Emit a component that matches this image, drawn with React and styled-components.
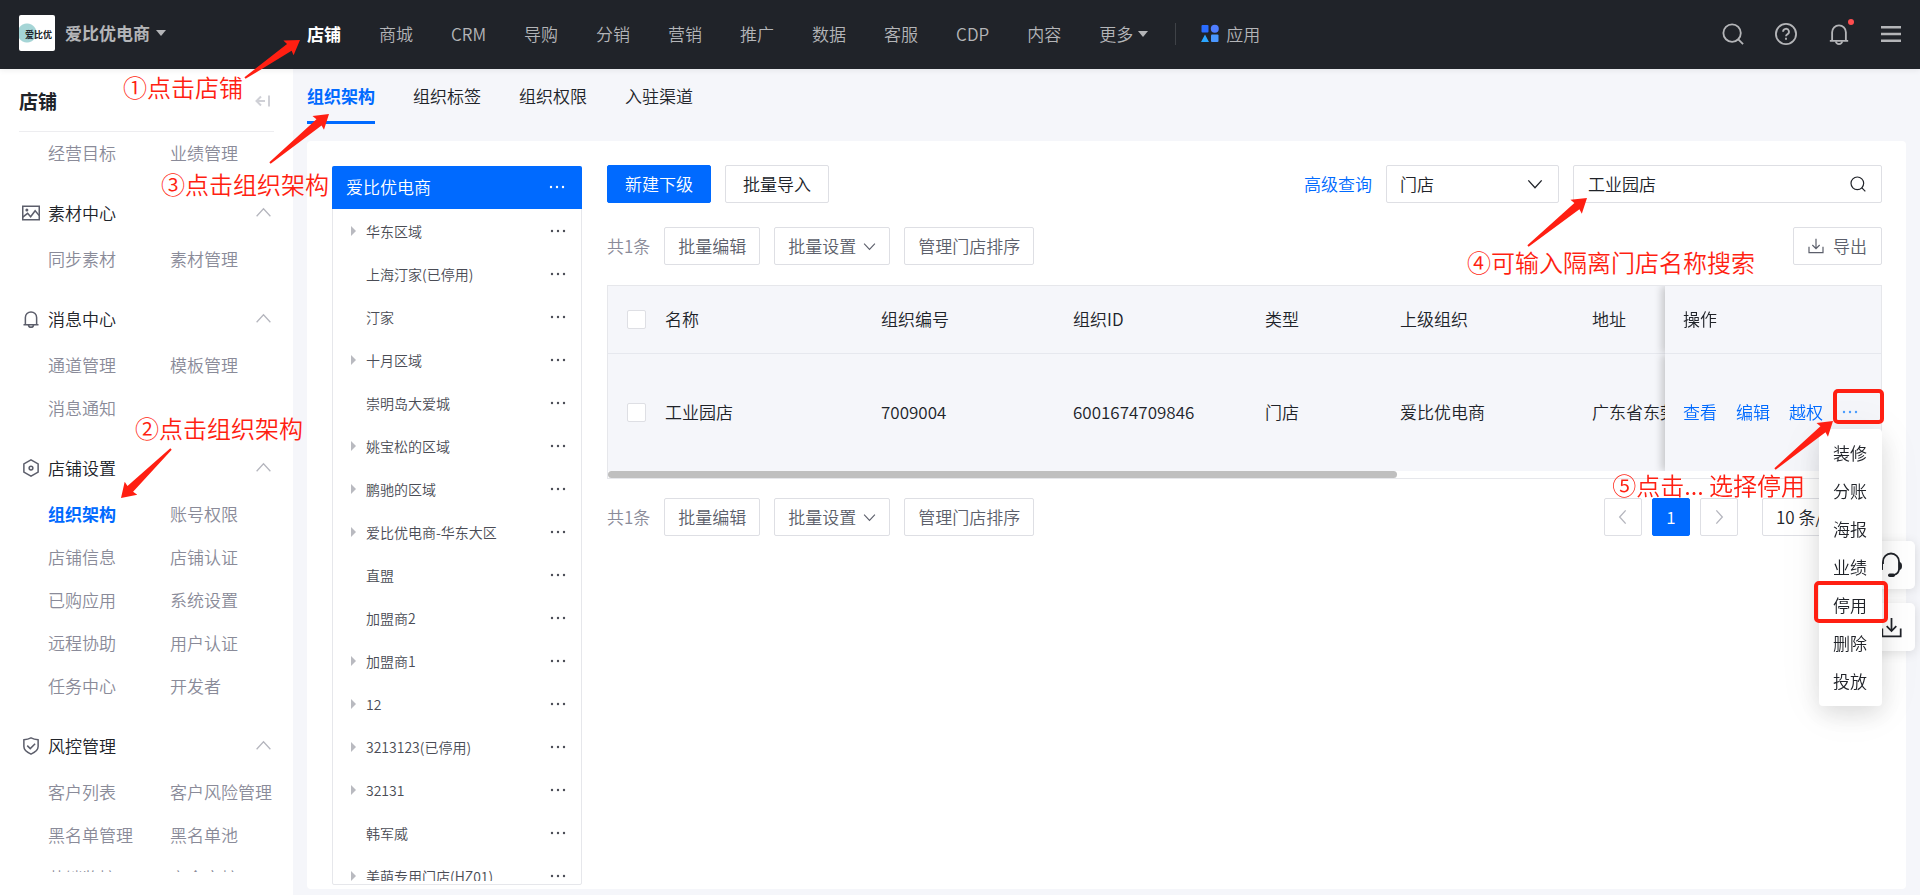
import React, { useState } from "react";
import styled, { createGlobalStyle, css } from "styled-components";

const navItems = ["店铺", "商城", "CRM", "导购", "分销", "营销", "推广", "数据", "客服", "CDP", "内容"];

const tabs = ["组织架构", "组织标签", "组织权限", "入驻渠道"];

const menuGroups = [
  { items: ["经营目标", "业绩管理"] },
  { title: "素材中心", icon: "image", items: ["同步素材", "素材管理"] },
  { title: "消息中心", icon: "bell", items: ["通道管理", "模板管理", "消息通知"] },
  {
    title: "店铺设置",
    icon: "hexagon",
    items: [
      "组织架构",
      "账号权限",
      "店铺信息",
      "店铺认证",
      "已购应用",
      "系统设置",
      "远程协助",
      "用户认证",
      "任务中心",
      "开发者",
    ],
  },
  {
    title: "风控管理",
    icon: "shield",
    items: ["客户列表", "客户风险管理", "黑名单管理", "黑名单池", "营销监控", "安全审核"],
  },
];

const treeNodes = [
  { name: "华东区域", open: true },
  { name: "上海汀家(已停用)" },
  { name: "汀家" },
  { name: "十月区域", open: true },
  { name: "崇明岛大爱城" },
  { name: "姚宝松的区域", open: true },
  { name: "鹏驰的区域", open: true },
  { name: "爱比优电商-华东大区", open: true },
  { name: "直盟" },
  { name: "加盟商2" },
  { name: "加盟商1", open: true },
  { name: "12", open: true },
  { name: "3213123(已停用)", open: true },
  { name: "32131", open: true },
  { name: "韩军威" },
  { name: "美萌专用门店(HZ01)", open: true },
];

const moreActions = ["装修", "分账", "海报", "业绩", "停用", "删除", "投放"];

/* ---------- icons ---------- */

const Svg = ({ size = 18, width = 1.5, children }) => (
  <svg
    width={size}
    height={size}
    viewBox="0 0 24 24"
    fill="none"
    stroke="currentColor"
    strokeWidth={width}
    aria-hidden="true"
  >
    {children}
  </svg>
);

const SearchIcon = ({ size, width }) => (
  <Svg size={size} width={width}>
    <circle cx="11" cy="11" r="9.5" />
    <path d="M17.5 17.5L23 23" />
  </Svg>
);

const HelpIcon = () => (
  <Svg size={22} width={2}>
    <circle cx="12" cy="12" r="11" />
    <path d="M8.8 9.6a3.2 3.2 0 1 1 4.6 2.8c-1 .5-1.4 1-1.4 2.1" />
    <path d="M12 16.2v2.2" />
  </Svg>
);

const BellIcon = ({ size, width = 2 }) => (
  <Svg size={size} width={width}>
    <path d="M2 19.5h20M4.5 19.5V10a7.5 7.5 0 0 1 15 0v9.5" />
    <path d="M8.5 20c.4 1.900 1.800 3 3.500 3s3.100-1.100 3.500-3" />
  </Svg>
);

const MenuIcon = () => (
  <svg width="20" height="22" viewBox="0 0 20 22" fill="currentColor" aria-hidden="true">
    <path d="M0 3h20v2.500H0zM0 9.700h20v2.500H0zM0 16.500h20V19H0z" />
  </svg>
);

const DownloadIcon = ({ size, width }) => (
  <Svg size={size} width={width}>
    <path d="M1.500 13v9h21v-9" />
    <path d="M12 1v14.500M6.500 10.500L12 16l5.500-5.500" />
  </Svg>
);

const HeadsetIcon = () => (
  <svg width="24" height="26" viewBox="0 0 24 26" fill="none" stroke="currentColor" aria-hidden="true">
    <path d="M4 12V9.500a8 8 0 0 1 16 0V17c0 3-2 5-5 6" strokeWidth="1.800" />
    <path d="M4 10v8c-2 0-3-1.500-3-4s1-4 3-4zM20 10v8c2 0 3-1.500 3-4s-1-4-3-4z" fill="currentColor" stroke="none" />
    <rect x="9" y="21.500" width="7" height="3.500" rx="1.700" fill="currentColor" stroke="none" />
  </svg>
);

const Chevron = ({ dir = "down", size = 14 }) => {
  const paths = {
    down: "M2 6.500L12 17.500L22 6.500",
    up: "M1 18L12 6L23 18",
    left: "M16 2L7 12L16 22",
    right: "M8 2L17 12L8 22",
  };
  return (
    <Svg size={size} width={2}>
      <path d={paths[dir]} />
    </Svg>
  );
};

const Dots = () => (
  <svg width="16" height="4" viewBox="0 0 16 4" fill="currentColor" aria-hidden="true">
    <circle cx="2" cy="2" r="1.200" />
    <circle cx="8" cy="2" r="1.200" />
    <circle cx="14" cy="2" r="1.200" />
  </svg>
);

const CaretDown = () => (
  <svg width="10" height="6" viewBox="0 0 10 6" fill="currentColor" aria-hidden="true">
    <path d="M0 0h10L5 6z" />
  </svg>
);

const AppsIcon = () => (
  <svg width="18" height="20" viewBox="0 0 18 20" aria-hidden="true">
    <rect x="0.500" y="1" width="7" height="7.500" rx="1" fill="#2a6cff" />
    <circle cx="13.800" cy="4.800" r="4" fill="#4f7dff" />
    <path d="M4 10.500L8 18H0z" fill="#2ba6ff" />
    <rect x="10" y="10.500" width="7.500" height="7.500" rx="1" fill="#4a97ff" />
  </svg>
);

const CollapseIcon = () => (
  <svg width="16" height="12" viewBox="0 0 16 12" fill="none" stroke="#cfd0d6" strokeWidth="2" aria-hidden="true">
    <path d="M1.500 6H10M6 1.500L1.500 6L6 10.500M14 0.500v11" />
  </svg>
);

function GroupIcon({ name }) {
  if (name === "image") {
    return (
      <Svg width={2}>
        <rect x="1" y="3" width="22" height="18" />
        <circle cx="6.500" cy="8" r="1" />
        <path d="M1 17.500l6.500-5 4 4.500 6-8 5.500 6.500" />
      </Svg>
    );
  }
  if (name === "bell") return <BellIcon size={18} />;
  if (name === "hexagon") {
    return (
      <Svg width={2}>
        <path d="M12 1.200l9.500 5.400v10.800L12 22.800l-9.500-5.400V6.600z" />
        <circle cx="12" cy="12" r="2.500" />
      </Svg>
    );
  }
  return (
    <Svg width={2}>
      <path d="M12 1.200c3 1.600 6 2.300 9.500 2.600v9c0 4.500-4 7.700-9.500 10-5.500-2.300-9.500-5.500-9.500-10v-9C6 3.500 9 2.800 12 1.200z" />
      <path d="M7 11.500l4 4 6.500-6.500" />
    </Svg>
  );
}

/* arrow of a note, drawn from its tail to its tip */
function NoteArrow({ dx, dy, ...pos }) {
  const w = Math.abs(dx);
  const h = Math.abs(dy);
  const len = Math.hypot(dx, dy);
  const angle = (Math.atan2(dy, dx) * 180) / Math.PI;
  return (
    <Arrow {...pos} width={w} height={h} aria-hidden="true">
      <g transform={`translate(${dx > 0 ? 0 : w} ${dy > 0 ? 0 : h}) rotate(${angle})`}>
        <polygon
          points={`0,-1 ${len - 13},-4 ${len - 14},-9 ${len},0 ${len - 14},9 ${len - 13},4 0,1`}
        />
      </g>
    </Arrow>
  );
}

/* ---------- parts ---------- */

function TopBar() {
  return (
    <Header>
      <Brand>
        <Logo>
          <span>爱比优</span>
        </Logo>
        <BrandButton type="button">
          爱比优电商
          <CaretDown />
        </BrandButton>
      </Brand>
      <Nav>
        {navItems.map((item, i) => (
          <NavLink href="#" key={item} $active={i === 0}>
            {item}
          </NavLink>
        ))}
        <NavLink href="#">
          更多
          <CaretDown />
        </NavLink>
        <Divider />
        <NavLink href="#" $apps>
          <AppsIcon />
          应用
        </NavLink>
      </Nav>
      <Tools>
        <IconButton aria-label="搜索">
          <SearchIcon size={22} width={2} />
        </IconButton>
        <IconButton aria-label="帮助">
          <HelpIcon />
        </IconButton>
        <IconButton aria-label="通知">
          <BellIcon size={22} />
          <Badge />
        </IconButton>
        <IconButton aria-label="菜单">
          <MenuIcon />
        </IconButton>
      </Tools>
    </Header>
  );
}

function SideMenu() {
  return (
    <Sidebar>
      <SideTitle>
        <h2>店铺</h2>
        <IconButton aria-label="收起">
          <CollapseIcon />
        </IconButton>
      </SideTitle>
      <SideScroll>
        {menuGroups.map((group) => (
          <section key={group.items[0]}>
            {group.title && (
              <GroupTitle type="button">
                <GroupIcon name={group.icon} />
                <span>{group.title}</span>
                <Chevron dir="up" size={15} />
              </GroupTitle>
            )}
            <GroupItems>
              {group.items.map((item) => (
                <SideLink href="#" key={item} $active={item === "组织架构"}>
                  {item}
                </SideLink>
              ))}
            </GroupItems>
          </section>
        ))}
      </SideScroll>
    </Sidebar>
  );
}

function OrgTree() {
  return (
    <Tree>
      <TreeHead>
        爱比优电商
        <IconButton aria-label="更多操作">
          <Dots />
        </IconButton>
      </TreeHead>
      <TreeList>
        {treeNodes.map((node) => (
          <TreeRow key={node.name}>
            <TreeCaret $show={node.open} />
            <span>{node.name}</span>
            <IconButton aria-label="更多操作">
              <Dots />
            </IconButton>
          </TreeRow>
        ))}
      </TreeList>
    </Tree>
  );
}

function BatchButtons() {
  return (
    <>
      <Total>共1条</Total>
      <Button $small>批量编辑</Button>
      <Button $small>
        批量设置
        <Chevron size={13} />
      </Button>
      <Button $small>管理门店排序</Button>
    </>
  );
}

function App() {
  const [keyword, setKeyword] = useState("工业园店");

  return (
    <Page>
      <GlobalStyle />
      <TopBar />
      <Body>
        <SideMenu />
        <Main>
          <Tabs>
            {tabs.map((tab, i) => (
              <Tab href="#" key={tab} $active={i === 0}>
                {tab}
              </Tab>
            ))}
          </Tabs>
          <Card>
            <OrgTree />
            <Content>
              <Toolbar>
                <Button $primary>新建下级</Button>
                <Button>批量导入</Button>
                <Spacer />
                <TextLink href="#">高级查询</TextLink>
                <SelectBox $wide>
                  <select aria-label="类型" defaultValue="门店">
                    <option>门店</option>
                  </select>
                  <Chevron size={16} />
                </SelectBox>
                <SearchBox>
                  <input
                    aria-label="门店名称"
                    value={keyword}
                    onChange={(e) => setKeyword(e.target.value)}
                  />
                  <IconButton aria-label="搜索">
                    <SearchIcon size={16} width={1.8} />
                  </IconButton>
                </SearchBox>
              </Toolbar>
              <Toolbar>
                <BatchButtons />
                <Spacer />
                <Button $export>
                  <DownloadIcon size={16} width={1.8} />
                  导出
                </Button>
              </Toolbar>
              <TableBox>
                <TableScroll>
                  <Table>
                    <colgroup>
                      <col width="40" />
                      <col width="216" />
                      <col width="192" />
                      <col width="192" />
                      <col width="135" />
                      <col width="192" />
                      <col />
                      <col width="216" />
                    </colgroup>
                    <thead>
                      <tr>
                        <th>
                          <Checkbox type="checkbox" aria-label="全选" />
                        </th>
                        <th>名称</th>
                        <th>组织编号</th>
                        <th>组织ID</th>
                        <th>类型</th>
                        <th>上级组织</th>
                        <th>地址</th>
                        <FixedTh>操作</FixedTh>
                      </tr>
                    </thead>
                    <tbody>
                      <tr>
                        <td>
                          <Checkbox type="checkbox" aria-label="工业园店" />
                        </td>
                        <td>工业园店</td>
                        <td>7009004</td>
                        <td>6001674709846</td>
                        <td>门店</td>
                        <td>爱比优电商</td>
                        <td>广东省东莞</td>
                        <FixedTd>
                          <Actions>
                            <TextLink href="#">查看</TextLink>
                            <TextLink href="#">编辑</TextLink>
                            <TextLink href="#">越权</TextLink>
                            <MoreButton aria-label="更多">
                              <Dots />
                            </MoreButton>
                          </Actions>
                        </FixedTd>
                      </tr>
                    </tbody>
                  </Table>
                </TableScroll>
                <ScrollTrack>
                  <ScrollThumb />
                </ScrollTrack>
              </TableBox>
              <Toolbar>
                <BatchButtons />
                <Spacer />
                <Pager>
                  <PageButton aria-label="上一页">
                    <Chevron dir="left" size={16} />
                  </PageButton>
                  <PageButton $active>1</PageButton>
                  <PageButton aria-label="下一页">
                    <Chevron dir="right" size={16} />
                  </PageButton>
                </Pager>
                <SelectBox>
                  <select aria-label="每页条数" defaultValue="10">
                    <option value="10">10 条/页</option>
                  </select>
                </SelectBox>
              </Toolbar>
            </Content>
          </Card>
        </Main>
      </Body>

      <FloatBar>
        <FloatButton aria-label="客服">
          <HeadsetIcon />
        </FloatButton>
        <FloatButton aria-label="下载">
          <DownloadIcon size={21} width={2} />
        </FloatButton>
      </FloatBar>
      <ActionMenu>
        {moreActions.map((action) => (
          <button type="button" key={action}>
            {action}
          </button>
        ))}
      </ActionMenu>

      <Note $left={123} $top={71}>①点击店铺</Note>
      <NoteArrow $left={245} $top={40} dx={55} dy={-38} />
      <Note $left={135} $top={412}>②点击组织架构</Note>
      <NoteArrow $left={121} $top={449} dx={-50} dy={49} />
      <Note $left={161} $top={168}>③点击组织架构</Note>
      <NoteArrow $left={270} $top={114} dx={59} dy={-49} />
      <Note $right={165} $top={246}>④可输入隔离门店名称搜索</Note>
      <NoteArrow $right={333} $top={198} dx={59} dy={-48} />
      <Note $right={115} $top={469}>⑤点击... 选择停用</Note>
      <NoteArrow $right={87} $top={421} dx={58} dy={-48} />
      <NoteBox $right={36} $top={389} $width={51} $height={35} />
      <NoteBox $right={32} $top={581} $width={74} $height={42} />
    </Page>
  );
}

/* ---------- styles ---------- */

const GlobalStyle = createGlobalStyle`
  * {
    box-sizing: border-box;
  }
  body {
    margin: 0;
    font-family: "Noto Sans CJK SC", sans-serif;
    font-size: 17px;
    font-weight: 350;
    line-height: 24px;
    color: #202329;
  }
  button, input, select {
    font: inherit;
    color: inherit;
    margin: 0;
  }
  button {
    cursor: pointer;
  }
  a {
    color: inherit;
    text-decoration: none;
  }
  h2 {
    margin: 0;
    font-size: 19px;
  }
  svg {
    flex-shrink: 0;
  }
`;

const Page = styled.div`
  position: relative;
  display: flex;
  flex-direction: column;
  height: 100vh;
  overflow: hidden;
  background: #f5f6fa;
`;

const Header = styled.header`
  display: flex;
  align-items: center;
  flex-shrink: 0;
  height: 69px;
  padding: 0 19px;
  background: #202329;
  color: #b4b5b8;
  box-shadow: 0 1px 6px rgba(0, 0, 0, 0.08);
  z-index: 1;
`;

const Brand = styled.div`
  display: flex;
  align-items: center;
  gap: 10px;
  width: 288px;
  padding-bottom: 3px;
`;

const Logo = styled.div`
  display: flex;
  align-items: center;
  width: 36px;
  height: 36px;
  overflow: hidden;
  border-radius: 2px;
  color: #202329;
  font-size: 9px;
  font-weight: 700;
  background: radial-gradient(circle at 8px 18px, #a5d5d6 9px, #fff 10px);
  span {
    padding: 4px 0 0 6px;
    white-space: nowrap;
  }
`;

const BrandButton = styled.button`
  display: flex;
  align-items: center;
  gap: 6px;
  padding: 0;
  border: 0;
  background: none;
  font-weight: 700;
`;

const Nav = styled.nav`
  display: flex;
  align-items: center;
  gap: 38px;
  padding-bottom: 1px;
`;

const NavLink = styled.a`
  display: flex;
  align-items: center;
  gap: ${(p) => (p.$apps ? "7px" : "5px")};
  white-space: nowrap;
  ${(p) =>
    p.$active &&
    css`
      color: #fff;
      font-weight: 700;
    `}
  ${(p) => p.$apps && "margin-left: -13px;"}
`;

const Divider = styled.span`
  width: 1px;
  height: 22px;
  margin-left: -11px;
  background: #3f4247;
`;

const Tools = styled.div`
  display: flex;
  gap: 31px;
  margin-left: auto;
  padding-bottom: 2px;
`;

const IconButton = styled.button.attrs({ type: "button" })`
  position: relative;
  display: flex;
  align-items: center;
  padding: 0;
  border: 0;
  background: none;
`;

const Badge = styled.span`
  position: absolute;
  top: -4px;
  right: -4px;
  width: 6px;
  height: 6px;
  border-radius: 50%;
  background: #ff4d4f;
`;

const Body = styled.div`
  display: flex;
  flex: 1;
  min-height: 0;
`;

const Sidebar = styled.aside`
  display: flex;
  flex-direction: column;
  flex-shrink: 0;
  width: 293px;
  padding-bottom: 23px;
  background: #fff;
`;

const SideTitle = styled.div`
  display: flex;
  align-items: center;
  justify-content: space-between;
  flex-shrink: 0;
  height: 63px;
  margin: 0 19px;
  padding: 1px 3px 0 0;
  border-bottom: 1px solid #ededf0;
`;

const SideScroll = styled.div`
  flex: 1;
  overflow: hidden;
`;

const GroupTitle = styled.button`
  display: flex;
  align-items: center;
  gap: 8px;
  width: 100%;
  height: 43px;
  margin: 17px 0 3px;
  padding: 0 22px 2px 22px;
  border: 0;
  background: none;
  text-align: left;
  svg {
    color: #5c5e6b;
  }
  span {
    flex: 1;
  }
  svg:last-child {
    color: #b5b6be;
  }
`;

const GroupItems = styled.div`
  display: grid;
  grid-template-columns: 122px 1fr;
  padding-left: 48px;
`;

const SideLink = styled.a`
  height: 43px;
  line-height: 41px;
  white-space: nowrap;
  color: ${(p) => (p.$active ? "#006aff" : "#8a8b99")};
  font-weight: ${(p) => (p.$active ? 700 : "inherit")};
`;

const Main = styled.main`
  display: flex;
  flex: 1;
  flex-direction: column;
  min-width: 0;
  padding: 0 14px 6px;
`;

const Tabs = styled.nav`
  display: flex;
  gap: 38px;
  height: 72px;
`;

const Tab = styled.a`
  height: 55px;
  line-height: 54px;
  color: ${(p) => (p.$active ? "#006aff" : "inherit")};
  font-weight: ${(p) => (p.$active ? 700 : "inherit")};
  border-bottom: ${(p) => (p.$active ? "3px solid #006aff" : "0")};
`;

const Card = styled.div`
  display: flex;
  flex: 1;
  gap: 25px;
  min-height: 0;
  padding: 24px 24px 4px 25px;
  border-radius: 4px;
  background: #fff;
`;

const Tree = styled.div`
  display: flex;
  flex-direction: column;
  flex-shrink: 0;
  width: 250px;
  margin-top: 1px;
  padding-bottom: 3px;
  border: 1px solid #e6e7eb;
  border-radius: 2px;
`;

const TreeHead = styled.div`
  display: flex;
  align-items: center;
  justify-content: space-between;
  flex-shrink: 0;
  height: 43px;
  margin: -1px -1px 0;
  padding: 0 17px 1px 14px;
  border-radius: 2px 2px 0 0;
  background: #006aff;
  color: #fff;
`;

const TreeList = styled.div`
  flex: 1;
  overflow: hidden;
`;

const TreeRow = styled.div`
  display: flex;
  align-items: center;
  height: 43px;
  padding: 0 15px 0 18px;
  color: #4a4c55;
  font-size: 14px;
  span {
    white-space: nowrap;
  }
  ${IconButton} {
    margin-left: auto;
  }
`;

const TreeCaret = styled.i`
  margin-right: 10px;
  border: 5px solid transparent;
  border-right: 0;
  border-left-color: ${(p) => (p.$show ? "#b9bac0" : "transparent")};
`;

const Content = styled.div`
  display: flex;
  flex: 1;
  flex-direction: column;
  min-width: 0;
`;

const Toolbar = styled.div`
  display: flex;
  align-items: center;
  gap: 14px;
  margin-bottom: 24px;
  &:nth-child(2) {
    margin-bottom: 20px;
  }
`;

const Spacer = styled.div`
  flex: 1;
`;

const Button = styled.button.attrs({ type: "button" })`
  display: flex;
  align-items: center;
  gap: ${(p) => (p.$export ? "9px" : "7px")};
  height: 38px;
  padding: 0 ${(p) => (p.$small ? "13px" : p.$export ? "14px" : "17px")};
  border: 1px solid ${(p) => (p.$primary ? "#006aff" : "#dedfe4")};
  border-radius: 2px;
  background: ${(p) => (p.$primary ? "#006aff" : "#fff")};
  color: ${(p) => (p.$primary ? "#fff" : p.$small || p.$export ? "#5c5f6b" : "#202329")};
  white-space: nowrap;
`;

const Total = styled.span`
  color: #8a8b99;
`;

const TextLink = styled.a`
  color: #006aff;
`;

const SelectBox = styled.div`
  display: flex;
  position: relative;
  width: ${(p) => (p.$wide ? "173px" : "120px")};
  height: 38px;
  border: 1px solid #dedfe4;
  border-radius: 2px;
  select {
    width: 100%;
    padding: 0 13px;
    border: 0;
    appearance: none;
    background: none;
  }
  svg {
    position: absolute;
    right: 15px;
    top: 10px;
    pointer-events: none;
  }
`;

const SearchBox = styled.div`
  display: flex;
  width: 309px;
  height: 38px;
  padding: 0 15px 0 14px;
  border: 1px solid #dedfe4;
  border-radius: 2px;
  input {
    flex: 1;
    min-width: 0;
    padding: 0;
    border: 0;
    outline: 0;
    background: none;
  }
`;

const TableBox = styled.div`
  margin-bottom: 19px;
  border: 1px solid #e6e7eb;
`;

const TableScroll = styled.div`
  overflow-x: auto;
  scrollbar-width: none;
`;

const Table = styled.table`
  width: 160%;
  table-layout: fixed;
  border-collapse: separate;
  border-spacing: 0;
  background: #f5f6fa;
  th,
  td {
    height: 117px;
    padding: 0 0 1px 17px;
    text-align: left;
    font-weight: inherit;
    white-space: nowrap;
  }
  th {
    height: 68px;
    border-bottom: 1px solid #e6e8ee;
  }
`;

const fixedCell = css`
  position: sticky;
  right: 0;
  background: #f5f6fa;
  box-shadow: -3px 0 8px rgba(0, 0, 0, 0.2);
  clip-path: inset(0 0 0 -12px);
`;

const FixedTh = styled.th`
  ${fixedCell}
  && {
    padding-left: 18px;
  }
`;

const FixedTd = styled.td`
  ${fixedCell}
  && {
    padding-left: 18px;
  }
`;

const Checkbox = styled.input`
  display: block;
  width: 19px;
  height: 19px;
  margin: 0 0 0 2px;
  border: 1px solid #dedfe4;
  border-radius: 2px;
  appearance: none;
  background: #fff;
`;

const Actions = styled.div`
  display: flex;
  align-items: center;
  gap: 19px;
`;

const MoreButton = styled(IconButton)`
  color: #4a9eff;
`;

const ScrollTrack = styled.div`
  height: 7px;
  background: #fff;
`;

const ScrollThumb = styled.div`
  width: 62%;
  height: 7px;
  border-radius: 4px;
  background: #bfbfbf;
`;

const Pager = styled.div`
  display: flex;
  gap: 10px;
  margin-right: 10px;
`;

const PageButton = styled.button.attrs({ type: "button" })`
  display: flex;
  align-items: center;
  justify-content: center;
  width: 38px;
  height: 38px;
  padding: 0;
  border: 1px solid ${(p) => (p.$active ? "#006aff" : "#dedfe4")};
  border-radius: 2px;
  background: ${(p) => (p.$active ? "#006aff" : "#fff")};
  color: ${(p) => (p.$active ? "#fff" : "#b5b6be")};
`;

const FloatBar = styled.div`
  position: absolute;
  top: 541px;
  right: 5px;
  display: flex;
  flex-direction: column;
  gap: 14px;
`;

const FloatButton = styled(IconButton)`
  justify-content: center;
  width: 48px;
  height: 48px;
  border-radius: 5px;
  background: #fff;
  box-shadow: 0 2px 12px rgba(0, 0, 0, 0.12);
`;

const ActionMenu = styled.div`
  position: absolute;
  top: 429px;
  right: 38px;
  padding: 5px 0 6px;
  border-radius: 4px;
  background: #fff;
  box-shadow: 0 8px 24px rgba(0, 0, 0, 0.12), 0 4px 48px rgba(0, 0, 0, 0.06);
  button {
    display: block;
    height: 38px;
    padding: 0 15px 0 14px;
    border: 0;
    background: none;
  }
`;

const place = css`
  position: absolute;
  top: ${(p) => p.$top}px;
  ${(p) => (p.$right === undefined ? `left: ${p.$left}px;` : `right: ${p.$right}px;`)}
  z-index: 2;
`;

const Note = styled.span`
  ${place}
  color: #ff1f12;
  font-size: 24px;
  line-height: 32px;
  white-space: nowrap;
`;

const Arrow = styled.svg`
  ${place}
  overflow: visible;
  fill: #ff1f12;
`;

const NoteBox = styled.div`
  ${place}
  width: ${(p) => p.$width}px;
  height: ${(p) => p.$height}px;
  border: 4px solid #ff1f12;
  border-radius: 5px;
`;

export default App;
